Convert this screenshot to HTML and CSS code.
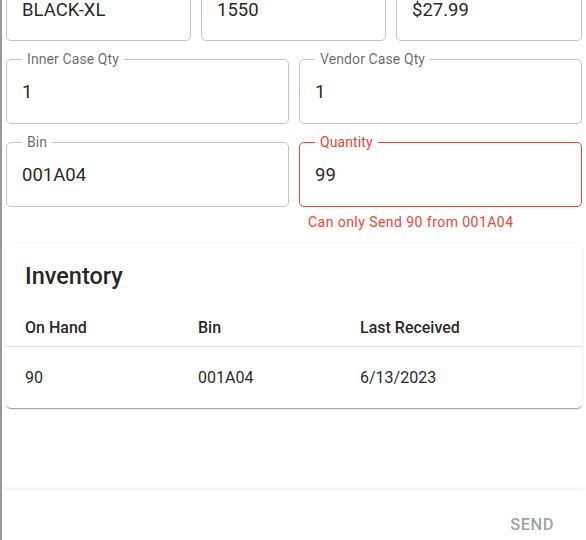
FILE: index.html
```html
<!DOCTYPE html>
<html>
<head>
<meta charset="utf-8">
<link rel="stylesheet" href="styles.css">
</head>
<body>
<div class="dialog">
  <div class="content">
    <div class="form">
      <div class="row three">
        <div class="field cut"><div class="value">BLACK-XL</div></div>
        <div class="field cut"><div class="value">1550</div></div>
        <div class="field cut"><div class="value">$27.99</div></div>
      </div>
      <div class="row two">
        <fieldset class="field"><legend>Inner Case Qty</legend><div class="value">1</div></fieldset>
        <fieldset class="field"><legend>Vendor Case Qty</legend><div class="value">1</div></fieldset>
      </div>
      <div class="row two">
        <fieldset class="field"><legend>Bin</legend><div class="value">001A04</div></fieldset>
        <div class="cell">
          <fieldset class="field error"><legend>Quantity</legend><div class="value">99</div></fieldset>
          <div class="helper">Can only Send 90 from 001A04</div>
        </div>
      </div>
    </div>
    <div class="card">
      <h2 class="card-title">Inventory</h2>
      <div class="table">
        <div class="tr head">
          <div>On Hand</div><div>Bin</div><div>Last Received</div>
        </div>
        <div class="tr body">
          <div>90</div><div>001A04</div><div>6/13/2023</div>
        </div>
      </div>
    </div>
  </div>
  <div class="actions">
    <button class="send" disabled>Send</button>
  </div>
</div>
</body>
</html>
```

FILE: styles.css
```css
html, body {
  margin: 0;
  padding: 0;
  background: #fff;
}
body {
  font-family: Roboto, "Liberation Sans", sans-serif;
  color: rgba(0, 0, 0, 0.87);
}
.dialog {
  width: 586px;
  height: 540px;
  box-sizing: border-box;
  border-left: 2px solid #9a9a9a;
  display: flex;
  flex-direction: column;
  overflow: hidden;
}
.content {
  height: 490px;
  overflow: hidden;
  padding: 0 4px 0 4px;
  flex: none;
}
.form {
  margin-top: -16px;
  display: flex;
  flex-direction: column;
  gap: 10px;
}
.row {
  display: grid;
  column-gap: 10px;
  align-items: start;
}
.row.three {
  grid-template-columns: 185px 185px 186px;
}
.row.two {
  grid-template-columns: 283px 283px;
}
.field {
  margin: 0;
  padding: 0 15px;
  border: 1px solid #c4c4c4;
  border-radius: 5px;
  min-width: 0;
}
.field legend {
  padding: 0 5px;
  margin-left: 0;
  font-size: 14px;
  line-height: 16px;
  color: rgba(0, 0, 0, 0.6);
  letter-spacing: 0.1px;
}
.field .value {
  font-size: 18.5px;
  line-height: 22px;
  padding: 14px 0 20px;
  color: rgba(0, 0, 0, 0.87);
}
.field.cut .value {
  padding-bottom: 19px;
}
.field.error {
  border-color: #f44336;
}
.field.error legend {
  color: #f44336;
}
.helper {
  color: #f44336;
  font-size: 14px;
  line-height: 18px;
  letter-spacing: 0.45px;
  margin-top: 6px;
  padding-left: 9px;
}
.card {
  margin-top: 13px;
  background: #fff;
  border-radius: 5px;
  box-shadow: 0 2px 1px -1px rgba(0,0,0,0.2), 0 1px 1px 0 rgba(0,0,0,0.14), 0 1px 3px 0 rgba(0,0,0,0.12);
  padding-top: 16px;
}
.card-title {
  margin: 0;
  padding-left: 19px;
  font-size: 23.5px;
  line-height: 32px;
  font-weight: 500;
  color: rgba(0, 0, 0, 0.87);
}
.table {
  margin-top: 16px;
}
.tr {
  display: grid;
  grid-template-columns: 173px 162px 1fr;
  padding-left: 19px;
  font-size: 16px;
  align-items: center;
}
.tr.head {
  height: 38px;
  font-weight: 500;
  border-bottom: 1px solid #e0e0e0;
}
.tr.body {
  height: 61px;
  color: rgba(0, 0, 0, 0.87);
}
.actions {
  flex: 1;
  position: relative;
  background: #fff;
  box-shadow: 0 -2px 6px rgba(0, 0, 0, 0.07);
  display: flex;
  justify-content: flex-end;
  align-items: center;
  padding-right: 23px;
}
.send {
  background: none;
  border: none;
  font-family: Roboto, "Liberation Sans", sans-serif;
  font-weight: 500;
  font-size: 16.5px;
  letter-spacing: 0.5px;
  text-transform: uppercase;
  color: rgba(0, 0, 0, 0.38);
  padding: 8px 9px;
  margin-top: 17px;
}
```
